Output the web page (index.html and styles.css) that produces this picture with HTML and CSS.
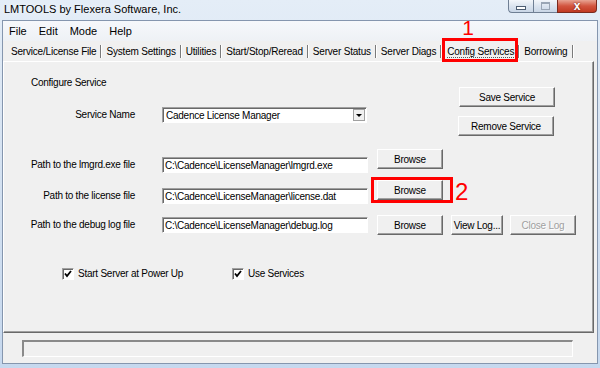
FILE: index.html
```html
<!DOCTYPE html>
<html lang="en">
<head>
    <meta charset="UTF-8">
    <title>LMTOOLS by Flexera Software, Inc.</title>
    <link rel="stylesheet" href="styles.css">
</head>
<body>
    <div class="titlebar">
        <span class="title">LMTOOLS by Flexera Software, Inc.</span>
        <div class="caption-btns">
            <span class="cap cap-min"><i></i></span>
            <span class="cap cap-max"><i></i></span>
            <span class="cap cap-close">x</span>
        </div>
    </div>

    <div class="client">
        <div class="menubar">
            <span>File</span>
            <span>Edit</span>
            <span>Mode</span>
            <span>Help</span>
        </div>

        <div class="tabs">
            <span class="tab">Service/License File</span>
            <span class="tab">System Settings</span>
            <span class="tab">Utilities</span>
            <span class="tab">Start/Stop/Reread</span>
            <span class="tab">Server Status</span>
            <span class="tab">Server Diags</span>
            <span class="tab active">
                <span class="focus">Config Services</span>
                <span class="callout callout-tab"><b class="num num-1">1</b></span>
            </span>
            <span class="tab">Borrowing</span>
        </div>

        <div class="panel">
            <div class="svc">
                <div class="svc-main">
                    <div class="heading">Configure Service</div>
                    <div class="row svc-row">
                        <label class="label">Service Name</label>
                        <div class="combo">
                            <span>Cadence License Manager</span>
                            <span class="drop"><i></i></span>
                        </div>
                    </div>
                </div>
                <div class="svc-actions">
                    <button class="btn btn-wide">Save Service</button>
                    <button class="btn btn-wide btn-shift">Remove Service</button>
                </div>
            </div>

            <div class="row path-row first">
                <label class="label low">Path to the lmgrd.exe file</label>
                <input class="field low" type="text" value="C:\Cadence\LicenseManager\lmgrd.exe">
                <button class="btn btn-browse">Browse</button>
            </div>

            <div class="row path-row second">
                <label class="label low">Path to the license file</label>
                <input class="field low" type="text" value="C:\Cadence\LicenseManager\license.dat">
                <span class="marked">
                    <button class="btn btn-browse">Browse</button>
                    <span class="callout callout-btn"></span>
                    <b class="num num-2">2</b>
                </span>
            </div>

            <div class="row path-row third">
                <label class="label mid">Path to the debug log file</label>
                <input class="field mid" type="text" value="C:\Cadence\LicenseManager\debug.log">
                <button class="btn btn-browse">Browse</button>
                <button class="btn btn-log">View Log...</button>
                <button class="btn btn-close" disabled>Close Log</button>
            </div>

            <div class="checks">
                <label class="check first-check"><span class="box"><svg width="8" height="8" viewBox="0 0 8 8"><polyline points="1,3.5 3,6 7,1" fill="none" stroke="#000" stroke-width="1.8"/></svg></span>Start Server at Power Up</label>
                <label class="check"><span class="box"><svg width="8" height="8" viewBox="0 0 8 8"><polyline points="1,3.5 3,6 7,1" fill="none" stroke="#000" stroke-width="1.8"/></svg></span>Use Services</label>
            </div>
        </div>

        <div class="statusbar">
            <div class="status"></div>
        </div>
    </div>
</body>
</html>
```

FILE: styles.css
```css
body {
    margin: 0;
    width: 600px;
    height: 368px;
    overflow: hidden;
    font-family: "Liberation Sans", Arial, sans-serif;
    background: linear-gradient(to bottom, #e4edf7 0, #d6e3f2 40%, #c6d8ee 100%);
    color: #000;
}

/* Title bar */
.titlebar {
    height: 20px;
    display: flex;
    align-items: flex-start;
}

.title {
    font-size: 11px;
    line-height: 19px;
    padding-left: 4px;
    text-shadow: 0 0 6px #fff;
}

.caption-btns {
    margin-left: auto;
    margin-right: 3px;
    display: flex;
}

.cap {
    height: 13px;
    border: 1px solid #6f7f94;
    border-top: none;
    background: linear-gradient(to bottom, #f3f6fa, #dbe4ef 50%, #c9d6e6);
    display: flex;
    justify-content: center;
    align-items: flex-end;
    box-sizing: border-box;
}

.cap-min {
    width: 25px;
    border-radius: 0 0 0 4px;
    border-right: none;
}

.cap-min i {
    width: 8px;
    height: 2px;
    border: 1px solid #4d5d72;
    background: #fff;
    margin-bottom: 2px;
}

.cap-max {
    width: 24px;
    border-right: none;
}

.cap-max i {
    width: 7px;
    height: 5px;
    border: 1px solid #9aa6b5;
    border-top-width: 2px;
    margin-bottom: 2px;
}

.cap-close {
    width: 40px;
    border-color: #7a2a1e;
    border-radius: 0 0 4px 0;
    background: linear-gradient(to bottom, #e8a493, #d2553f 50%, #c13a22);
    color: #fff;
    font: bold 12px/12px "Liberation Sans", Arial, sans-serif;
    align-items: center;
    text-shadow: 0 0 2px #5a1208;
}

/* Client area */
.client {
    margin: 0 2px;
    height: 342px;
    border: 1px solid #8596ae;
    background: #f0f0f0;
}

.menubar {
    height: 20px;
    display: flex;
    align-items: center;
    font-size: 11px;
    background: linear-gradient(to bottom, #f6f8fb, #eef1f5);
}

.menubar span {
    padding: 0 6px;
}

.tabs {
    height: 20px;
    display: flex;
    align-items: flex-start;
    padding-left: 3px;
    font-size: 10px;
    letter-spacing: -0.2px;
}

.tab {
    position: relative;
    margin-top: 4px;
    line-height: 13px;
    padding: 0 4px 0 5px;
    border-right: 1px solid #7a7a7a;
    box-shadow: 1px 0 0 #fff;
}

.tab.active {
    padding: 0 4px 0 6px;
}

.focus {
    border-bottom: 1px dotted #555;
}

/* Red callouts */
.callout {
    position: absolute;
    border: 3px solid #f00;
    box-sizing: border-box;
}

.callout-tab {
    left: 1px;
    top: -7px;
    width: 76px;
    height: 24px;
}

.num {
    position: absolute;
    color: #f00;
    font-weight: normal;
    line-height: 1;
    letter-spacing: 0;
}

.num-1 {
    font-size: 21px;
    left: 17px;
    top: -24px;
}

.marked {
    position: relative;
    margin-left: 9px;
}

.marked .btn-browse {
    margin-left: 0;
}

.callout-btn {
    left: -6px;
    top: -3px;
    width: 82px;
    height: 26px;
}

.num-2 {
    font-size: 24px;
    left: 78px;
    top: 0;
}

/* Tab page */
.panel {
    height: 272px;
    margin-right: 3px;
    box-sizing: border-box;
    border-top: 1px solid #fff;
    border-left: 1px solid #fff;
    border-right: 1px solid #696969;
    border-bottom: 1px solid #696969;
    box-shadow: inset -1px -1px 0 #a0a0a0;
    font-size: 10px;
    letter-spacing: -0.25px;
}

.svc {
    display: flex;
}

.svc-main {
    width: 455px;
}

.heading {
    margin: 14px 0 0 27px;
    line-height: 14px;
}

.row {
    display: flex;
    align-items: flex-start;
}

.svc-row {
    margin-top: 17px;
    align-items: center;
}

.label {
    width: 131px;
    padding-right: 2px;
    text-align: right;
    line-height: 16px;
}

.combo {
    width: 205px;
    height: 16px;
    margin-left: 25px;
    box-sizing: border-box;
    display: flex;
    align-items: center;
    justify-content: space-between;
    background: #fff;
    border-top: 1px solid #a0a0a0;
    border-left: 1px solid #a0a0a0;
    border-right: 1px solid #fff;
    border-bottom: 1px solid #fff;
    box-shadow: inset 1px 1px 0 #696969;
    padding-left: 3px;
}

.drop {
    width: 12px;
    height: 12px;
    margin-right: 1px;
    background: #f0f0f0;
    border: 1px solid #a0a0a0;
    box-sizing: border-box;
    display: flex;
    justify-content: center;
    align-items: center;
}

.drop i {
    border-left: 3px solid transparent;
    border-right: 3px solid transparent;
    border-top: 3px solid #000;
}

.svc-actions {
    display: flex;
    flex-direction: column;
    gap: 9px;
    margin-top: 25px;
}

.btn {
    height: 20px;
    padding: 0;
    box-sizing: border-box;
    font-family: "Liberation Sans", Arial, sans-serif;
    font-size: 10px;
    letter-spacing: -0.25px;
    color: #000;
    background: #f0f0f0;
    border-top: 1px solid #fff;
    border-left: 1px solid #fff;
    border-right: 1px solid #696969;
    border-bottom: 1px solid #696969;
    box-shadow: inset -1px -1px 0 #a0a0a0;
}

.btn-wide {
    width: 96px;
}

.btn-shift {
    margin-left: -1px;
}

.btn-browse {
    width: 66px;
    margin-left: 9px;
}

.btn-log {
    width: 52px;
    margin-left: 8px;
}

.btn-close {
    width: 66px;
    margin-left: 7px;
    color: #a0a0a0;
    text-shadow: 1px 1px 0 #fff;
}

.field {
    width: 206px;
    height: 16px;
    margin: 0 0 0 25px;
    padding: 0 0 0 2px;
    box-sizing: border-box;
    font-family: "Liberation Sans", Arial, sans-serif;
    font-size: 10px;
    letter-spacing: -0.25px;
    background: #fff;
    border-top: 1px solid #a0a0a0;
    border-left: 1px solid #a0a0a0;
    border-right: 1px solid #fff;
    border-bottom: 1px solid #fff;
    box-shadow: inset 1px 1px 0 #696969;
    outline: none;
}

.label.low,
.field.low {
    margin-top: 8px;
}

.label.mid,
.field.mid {
    margin-top: 2px;
}

.path-row.first {
    margin-top: 13px;
}

.path-row.second {
    margin-top: 7px;
}

.path-row.third {
    margin-top: 11px;
}

.checks {
    display: flex;
    margin: 33px 0 0 58px;
}

.check {
    display: flex;
    align-items: center;
    line-height: 12px;
}

.first-check {
    width: 170px;
}

.box {
    width: 12px;
    height: 12px;
    margin-right: 4px;
    box-sizing: border-box;
    display: flex;
    justify-content: center;
    align-items: center;
    background: #fff;
    border-top: 1px solid #a0a0a0;
    border-left: 1px solid #a0a0a0;
    border-right: 1px solid #fff;
    border-bottom: 1px solid #fff;
    box-shadow: inset 1px 1px 0 #696969;
}

/* Status bar */
.statusbar {
    height: 30px;
    padding: 7px 0 0 19px;
    box-sizing: border-box;
}

.status {
    width: 551px;
    height: 17px;
    box-sizing: border-box;
    border-top: 2px solid #8a8a8a;
    border-left: 2px solid #8a8a8a;
    border-right: 1px solid #fff;
    border-bottom: 1px solid #fff;
}
```
